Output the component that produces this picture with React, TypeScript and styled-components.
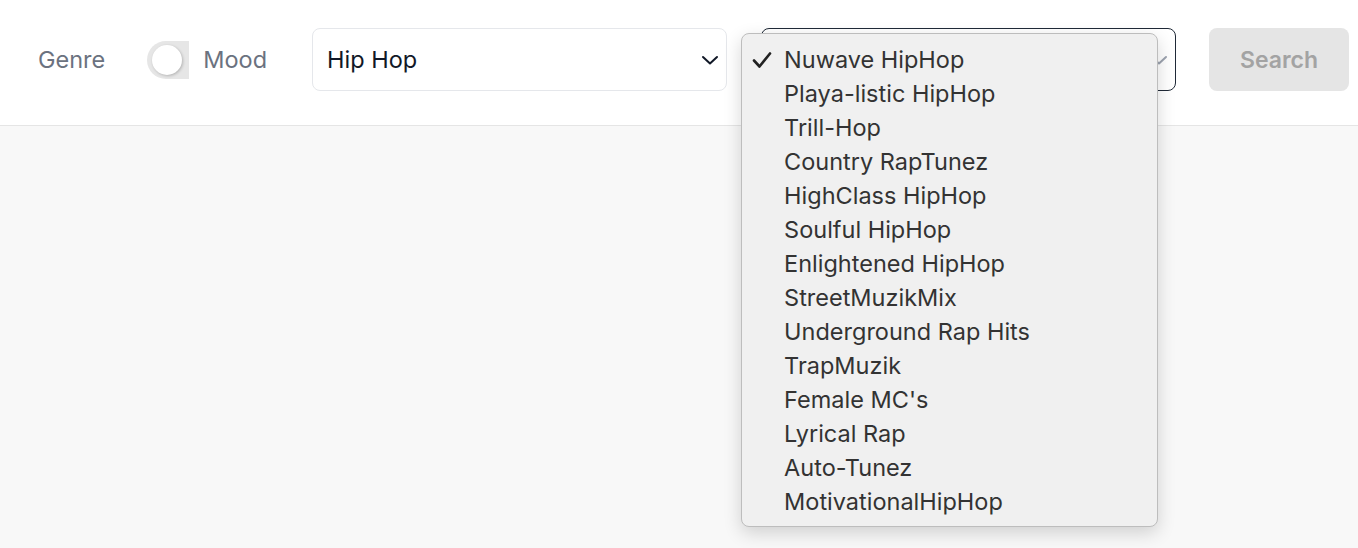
import React from "react";
import styled, { createGlobalStyle } from "styled-components";

const Global = createGlobalStyle`
  html, body { margin: 0; padding: 0; height: 100%; }
  body { font-family: Inter, "Noto Sans", sans-serif; background: #f8f8f8; }
  #root { min-height: 548px; }
`;

const Page = styled.div`
  display: flex;
  flex-direction: column;
  min-height: 548px;
  background: #f8f8f8;
`;

const Header = styled.header`
  display: flex;
  align-items: center;
  height: 126px;
  padding: 0 9px 6px 38px;
  box-sizing: border-box;
  background: #ffffff;
  border-bottom: 1px solid #e5e5e5;
`;

const Label = styled.span<{ $ml?: number }>`
  font-size: 23.5px;
  color: #6b7280;
  margin-left: ${(p) => p.$ml ?? 0}px;
`;

const Toggle = styled.div`
  position: relative;
  display: flex;
  align-items: center;
  width: 42px;
  height: 38px;
  margin-left: 42px;
  background: #e6e6e6;
  border-radius: 19px 0 0 19px;
  box-sizing: border-box;
  padding-left: 5px;
`;

const Knob = styled.div`
  width: 30px;
  height: 30px;
  border-radius: 50%;
  background: #ffffff;
  box-shadow: 1px 1px 3px rgba(0, 0, 0, 0.22);
`;

const SelectBox = styled.div<{ $active?: boolean; $ml: number }>`
  position: relative;
  display: flex;
  align-items: center;
  justify-content: space-between;
  width: 415px;
  height: 63px;
  margin-left: ${(p) => p.$ml}px;
  padding: 0 7px 0 14px;
  box-sizing: border-box;
  background: #ffffff;
  border: 1px solid ${(p) => (p.$active ? "#1f2937" : "#e5e7eb")};
  border-radius: 8px;
  color: #111827;
  font-size: 23.5px;
`;

const Chevron = styled.svg<{ $muted?: boolean }>`
  width: 18px;
  height: 18px;
  color: ${(p) => (p.$muted ? "#9ca3af" : "#111827")};
`;

const SearchButton = styled.button`
  width: 140px;
  height: 63px;
  margin-left: 33px;
  border: none;
  border-radius: 8px;
  background: #e5e5e5;
  color: #a3a3a3;
  font-family: Inter, "Noto Sans", sans-serif;
  font-size: 23px;
  font-weight: 600;
`;

const Menu = styled.ul`
  position: absolute;
  left: -21px;
  top: 4px;
  width: 417px;
  margin: 0;
  padding: 9px 0 7px;
  list-style: none;
  box-sizing: border-box;
  background: #f0f0f0;
  border: 1px solid #bdbdbd;
  border-radius: 8px;
  box-shadow: 0 6px 18px rgba(0, 0, 0, 0.16);
  z-index: 10;
`;

const Item = styled.li`
  position: relative;
  height: 34px;
  line-height: 34px;
  padding-left: 42px;
  font-size: 23.5px;
  color: #333333;
  white-space: nowrap;
`;

const Check = styled.svg`
  position: absolute;
  left: 10px;
  top: 8px;
  width: 20px;
  height: 18px;
`;

const Body = styled.main`
  flex: 1;
  background: #f8f8f8;
`;

const items = [
  "Nuwave HipHop",
  "Playa-listic HipHop",
  "Trill-Hop",
  "Country RapTunez",
  "HighClass HipHop",
  "Soulful HipHop",
  "Enlightened HipHop",
  "StreetMuzikMix",
  "Underground Rap Hits",
  "TrapMuzik",
  "Female MC's",
  "Lyrical Rap",
  "Auto-Tunez",
  "MotivationalHipHop",
];

const ChevronIcon = ({ muted }: { muted?: boolean }) => (
  <Chevron $muted={muted} viewBox="0 0 18 18" fill="none">
    <path d="M2 6 L9 12.5 L16 6" stroke="currentColor" strokeWidth="2" strokeLinecap="round" strokeLinejoin="round" />
  </Chevron>
);

export default function App() {
  return (
    <Page>
      <Global />
      <Header>
        <Label>Genre</Label>
        <Toggle>
          <Knob />
        </Toggle>
        <Label $ml={14}>Mood</Label>
        <SelectBox $ml={45}>
          <span>Hip Hop</span>
          <ChevronIcon />
        </SelectBox>
        <SelectBox $ml={34} $active>
          <span />
          <ChevronIcon muted />
          <Menu>
            {items.map((it, i) => (
              <Item key={it}>
                {i === 0 && (
                  <Check viewBox="0 0 20 18" fill="none">
                    <path d="M2 9.5 L7.5 15.5 L18 2.5" stroke="#222" strokeWidth="2.6" strokeLinecap="round" strokeLinejoin="round" />
                  </Check>
                )}
                {it}
              </Item>
            ))}
          </Menu>
        </SelectBox>
        <SearchButton>Search</SearchButton>
      </Header>
      <Body />
    </Page>
  );
}
